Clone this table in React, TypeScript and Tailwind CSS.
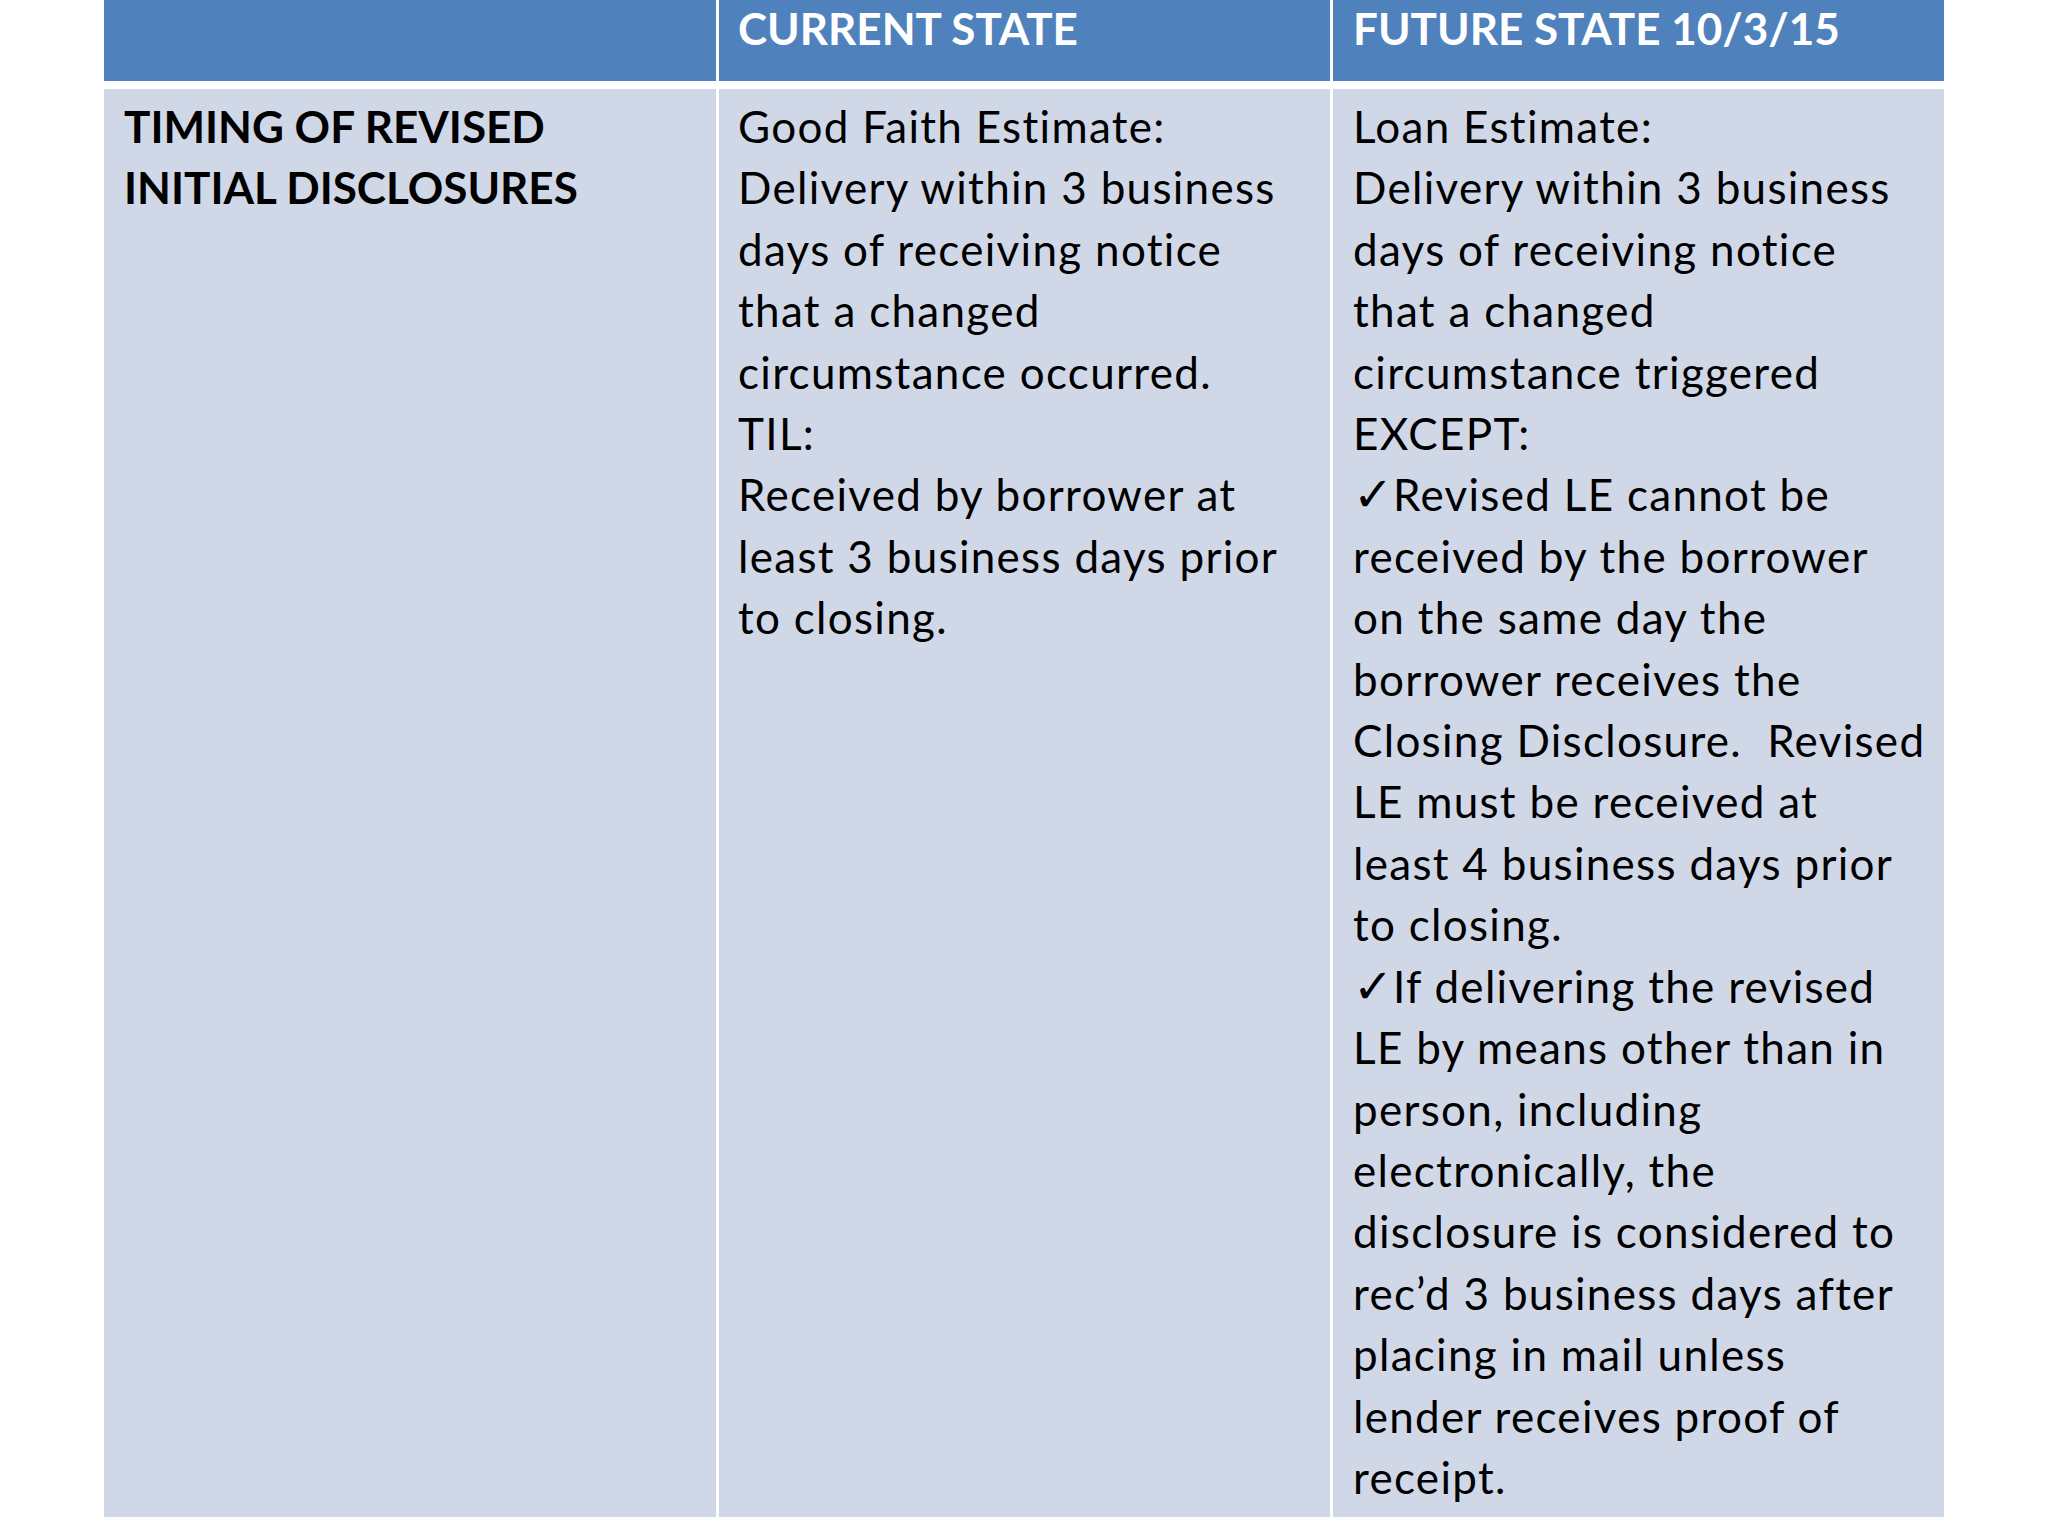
import React from "react"

const currentLines = [
  "Good Faith Estimate:",
  "Delivery within 3 business",
  "days of receiving notice",
  "that a changed",
  "circumstance occurred.",
  "TIL:",
  "Received by borrower at",
  "least 3 business days prior",
  "to closing.",
]

const futureLines = [
  "Loan Estimate:",
  "Delivery within 3 business",
  "days of receiving notice",
  "that a changed",
  "circumstance triggered",
  "EXCEPT:",
  "\u2713Revised LE cannot be",
  "received by the borrower",
  "on the same day the",
  "borrower receives the",
  "Closing Disclosure.  Revised",
  "LE must be received at",
  "least 4 business days prior",
  "to closing.",
  "\u2713If delivering the revised",
  "LE by means other than in",
  "person, including",
  "electronically, the",
  "disclosure is considered to",
  "rec\u2019d 3 business days after",
  "placing in mail unless",
  "lender receives proof of",
  "receipt.",
]

function Line({ text }: { text: string }) {
  // check mark bullets are drawn a touch larger, like the slide's glyph
  if (text.startsWith("\u2713")) {
    return (
      <div className="whitespace-pre">
        <span className="text-[48px] leading-none tracking-normal">{"\u2713"}</span>
        {text.slice(1)}
      </div>
    )
  }
  return <div className="whitespace-pre">{text}</div>
}

function Lines({ lines }: { lines: string[] }) {
  return (
    <div className="text-[44px] leading-[61.4px] tracking-[1.3px] text-black">
      {lines.map((l, i) => (
        <Line key={i} text={l} />
      ))}
    </div>
  )
}

export default function App() {
  return (
    <div
      className="w-[2048px] h-[1536px] bg-white overflow-hidden"
      style={{ fontFamily: "Lato, 'Open Sans', sans-serif" }}
    >
      <div className="ml-[104px] w-[1840px]">
        {/* header row */}
        <div className="grid grid-cols-[612px_611px_611px] gap-x-[3px] h-[81px]">
          <div className="bg-[#4f81bd]" />
          <div className="bg-[#4f81bd] pl-[19px] pt-[6px] text-[44px] leading-[44px] font-bold text-white">
            CURRENT STATE
          </div>
          <div className="bg-[#4f81bd] pl-[20px] pt-[6px] text-[44px] leading-[44px] font-bold text-white">
            FUTURE STATE 10/3/15
          </div>
        </div>

        {/* body row */}
        <div className="mt-[8px] grid grid-cols-[612px_611px_611px] gap-x-[3px] h-[1428px]">
          <div className="bg-[#d0d8e8] pl-[20px] pt-[7px] text-[44px] leading-[61.4px] font-bold text-black">
            <div>TIMING OF REVISED</div>
            <div>INITIAL DISCLOSURES</div>
          </div>
          <div className="bg-[#d0d8e8] pl-[19px] pt-[7px]">
            <Lines lines={currentLines} />
          </div>
          <div className="bg-[#d0d8e8] pl-[20px] pt-[7px]">
            <Lines lines={futureLines} />
          </div>
        </div>
      </div>
    </div>
  )
}
